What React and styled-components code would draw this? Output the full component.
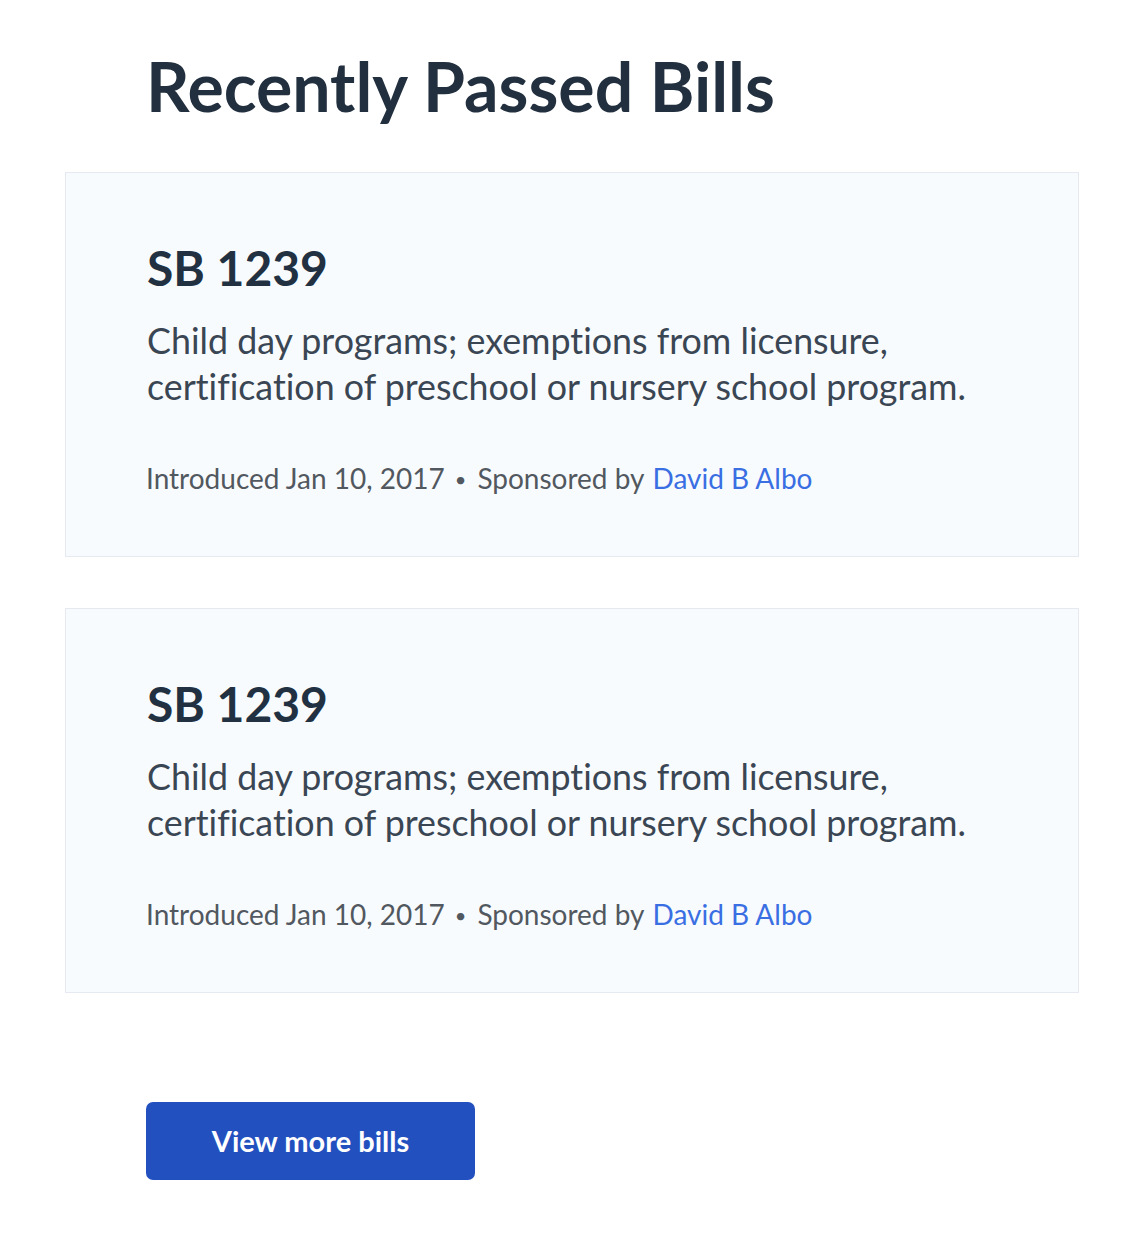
import React from 'react';
import styled, { createGlobalStyle } from 'styled-components';

const GlobalStyle = createGlobalStyle`
  html, body {
    margin: 0;
    padding: 0;
    background: #ffffff;
  }

  body {
    font-family: Lato, "Open Sans", sans-serif;
    font-variant-ligatures: no-common-ligatures;
    -webkit-font-smoothing: antialiased;
  }
`;

const Page = styled.main`
  width: 1014px;
  padding: 45px 0 60px 65px;
`;

const Heading = styled.h1`
  margin: 0 0 45px 81px;
  font-size: 68px;
  line-height: 1.2;
  font-weight: 700;
  color: #222f3e;
`;

const BillList = styled.div`
  display: flex;
  flex-direction: column;
  gap: 51px;
`;

const Card = styled.article`
  box-sizing: border-box;
  height: 385px;
  padding: 66px 81px 0;
  background: #f8fbfd;
  border: 1px solid #e4eaef;
`;

const BillNumber = styled.h2`
  margin: 0 0 22px;
  font-size: 48px;
  line-height: 1.2;
  font-weight: 700;
  color: #213142;
`;

const Summary = styled.p`
  margin: 0 0 52px;
  font-size: 35.8px;
  line-height: 46px;
  color: #3a4653;
`;

const Meta = styled.div`
  display: flex;
  align-items: center;
  margin-left: -1px;
  font-size: 28px;
  line-height: 1.2;
  color: #52585f;
`;

const Dot = styled.span`
  margin: 0 11px 0 10px;
  font-size: 20px;
`;

const SponsorLink = styled.a`
  margin-left: 8px;
  color: #3a6fe3;
  text-decoration: none;
`;

const MoreButton = styled.button`
  display: block;
  width: 329px;
  height: 78px;
  margin: 109px 0 0 81px;
  border: none;
  border-radius: 7px;
  background: #2350bf;
  color: #ffffff;
  font-family: inherit;
  font-size: 29px;
  font-weight: 700;
  cursor: pointer;
`;

const bills = [
  {
    id: 1,
    number: 'SB 1239',
    summary:
      'Child day programs; exemptions from licensure, certification of preschool or nursery school program.',
    introduced: 'Jan 10, 2017',
    sponsor: 'David B Albo',
  },
  {
    id: 2,
    number: 'SB 1239',
    summary:
      'Child day programs; exemptions from licensure, certification of preschool or nursery school program.',
    introduced: 'Jan 10, 2017',
    sponsor: 'David B Albo',
  },
];

const BillCard = ({ bill }) => (
  <Card>
    <BillNumber>{bill.number}</BillNumber>
    <Summary>{bill.summary}</Summary>
    <Meta>
      <span>Introduced {bill.introduced}</span>
      <Dot>•</Dot>
      <span>Sponsored by</span>
      <SponsorLink href="#">{bill.sponsor}</SponsorLink>
    </Meta>
  </Card>
);

const App = () => (
  <>
    <GlobalStyle />
    <Page>
      <Heading>Recently Passed Bills</Heading>
      <BillList>
        {bills.map(bill => (
          <BillCard key={bill.id} bill={bill} />
        ))}
      </BillList>
      <MoreButton type="button">View more bills</MoreButton>
    </Page>
  </>
);

export default App;
